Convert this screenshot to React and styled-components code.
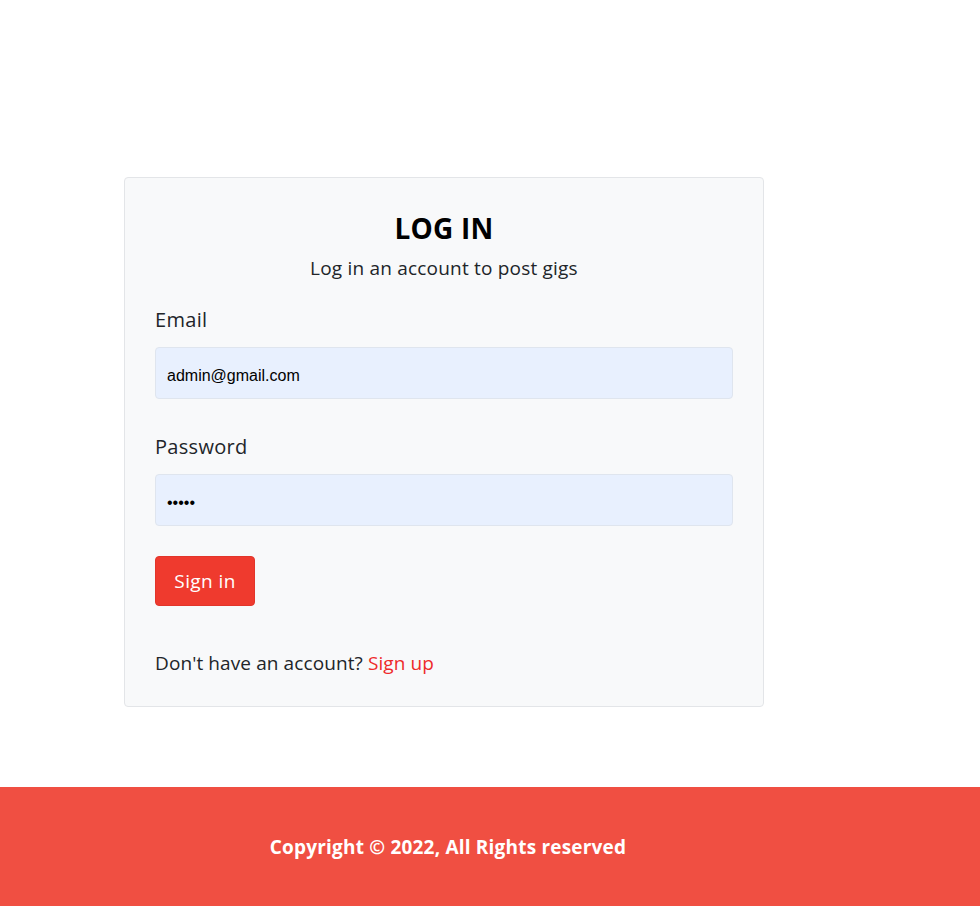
import React from "react";
import styled, { createGlobalStyle } from "styled-components";

const Global = createGlobalStyle`
  html, body { margin: 0; padding: 0; background: #fff; }
  body { font-family: "Segoe UI", "Open Sans", "Noto Sans", sans-serif; color: #212529; }
  * { box-sizing: border-box; }
`;

const Page = styled.div`
  display: flex;
  flex-direction: column;
  padding-top: 177px;
`;

const Wrap = styled.div`
  width: 640px;
  margin-left: 124px;
`;

const Card = styled.div`
  background: #f8f9fa;
  border: 1px solid #e3e5e8;
  border-radius: 4px;
  padding: 33px 30px 29px;
  display: flex;
  flex-direction: column;
`;

const Title = styled.h3`
  margin: 0;
  text-align: center;
  font-size: 28px;
  line-height: 34px;
  font-weight: 700;
  color: #000;
  letter-spacing: 0.2px;
`;

const Subtitle = styled.p`
  margin: 9px 0 0;
  text-align: center;
  font-size: 19px;
  line-height: 28px;
  color: #212529;
  letter-spacing: 0.2px;
`;

const Label = styled.label`
  display: block;
  margin-top: ${(p) => p.$mt}px;
  font-size: 20px;
  line-height: 30px;
  color: #212529;
  letter-spacing: 0.3px;
`;

const Input = styled.input`
  display: block;
  width: 100%;
  height: 52px;
  margin-top: 12px;
  padding: 5px 11px 0;
  background: #e8f0fe;
  border: 1px solid #dfe5ee;
  border-radius: 4px;
  font-family: "Liberation Sans", Arial, sans-serif;
  font-size: 16px;
  color: #000;
  outline: none;
`;

const Button = styled.button`
  align-self: flex-start;
  margin-top: 30px;
  width: 100px;
  height: 50px;
  background: #ef3a2e;
  border: 1px solid #e2352a;
  border-radius: 4px;
  color: #fff;
  font-family: inherit;
  font-size: 19px;
  letter-spacing: 0.4px;
  cursor: pointer;
`;

const Foot = styled.p`
  margin: 43px 0 0;
  font-size: 19px;
  line-height: 28px;
  color: #212529;
  letter-spacing: 0.1px;
`;

const Link = styled.a`
  color: #ee2a2a;
  text-decoration: none;
`;

const Footer = styled.footer`
  margin-top: 80px;
  height: 120px;
  background: #f04f42;
  border-bottom: 1px solid #000;
  display: flex;
  align-items: center;
`;

const FooterInner = styled.div`
  width: 648px;
  margin-left: 124px;
  text-align: center;
  color: #fff;
  font-weight: 700;
  font-size: 19px;
  line-height: 28px;
  letter-spacing: 0.2px;
`;

export default function App() {
  return (
    <>
      <Global />
      <Page>
        <Wrap>
          <Card>
            <Title>LOG IN</Title>
            <Subtitle>Log in an account to post gigs</Subtitle>
            <Label $mt={23}>Email</Label>
            <Input type="email" defaultValue="admin@gmail.com" readOnly />
            <Label $mt={33}>Password</Label>
            <Input type="password" defaultValue="12345" readOnly />
            <Button>Sign in</Button>
            <Foot>
              Don't have an account? <Link href="#">Sign up</Link>
            </Foot>
          </Card>
        </Wrap>
        <Footer>
          <FooterInner>Copyright © 2022, All Rights reserved</FooterInner>
        </Footer>
      </Page>
    </>
  );
}
